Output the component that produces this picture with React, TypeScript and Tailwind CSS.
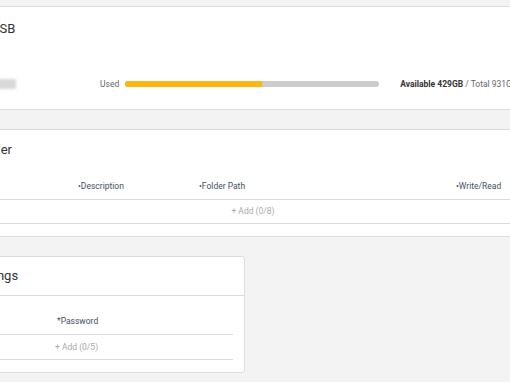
export default function App() {
  return (
    <div className="w-[510px] h-[382px] overflow-hidden bg-[#f3f3f3] font-['Roboto',sans-serif]">
      <div className="-ml-[90px] w-[680px] pt-[6px] flex flex-col gap-[19px]">
        {/* Storage card */}
        <div className="h-[104px] bg-white border border-[#dcdcdc]">
          <div className="h-[44px] flex items-center pl-[80px] text-[13px] text-[#333]">USB</div>
          <div className="mt-[26px] h-[14px] flex items-center text-[8.5px]">
            <div className="ml-[78px] w-[27px] h-[10px] bg-[#d8d8d8] blur-[1.5px]" />
            <span className="ml-[84px] text-[#666]">Used</span>
            <div className="ml-[6px] w-[254px] h-[6px] rounded-full bg-[#cccccc] overflow-hidden">
              <div className="h-full bg-[#fbb614]" style={{ width: '54%' }} />
            </div>
            <span className="ml-[21px] whitespace-nowrap text-[#666]">
              <b className="text-[#333]">Available 429GB</b> / Total 931GB
            </span>
          </div>
        </div>

        {/* Shared folder card */}
        <div className="h-[108px] bg-white border border-[#dcdcdc]">
          <div className="h-[40px] flex items-center pl-[21px] text-[13px] text-[#333]">Shared Folder</div>
          <div className="ml-[42px] w-[600px]">
            <div className="h-[30px] grid grid-cols-[125px_121px_257px_1fr] items-end pb-[6px] border-b border-[#dcdcdc] text-[8.5px] text-[#3f4f63]">
              <span>•Name</span>
              <span>•Description</span>
              <span>•Folder Path</span>
              <span>•Write/Read</span>
            </div>
            <div className="h-[24px] flex items-center justify-center border-b border-[#dcdcdc] text-[8.5px] text-[#aaa]">
              + Add (0/8)
            </div>
          </div>
        </div>

        {/* Account settings card */}
        <div className="w-[335px] h-[117px] bg-white border border-[#dcdcdc] rounded-[3px]">
          <div className="h-[39px] flex items-center pl-[30px] border-b border-[#dcdcdc] text-[13px] text-[#333]">
            User Settings
          </div>
          <div className="ml-[42px] mr-[11px]">
            <div className="h-[39px] grid grid-cols-[104px_1fr] items-end pb-[6px] border-b border-[#dcdcdc] text-[8.5px] text-[#3f4f63]">
              <span>*Username</span>
              <span>*Password</span>
            </div>
            <div className="h-[25px] flex items-center pl-[102px] border-b border-[#dcdcdc] text-[8.5px] text-[#aaa]">
              + Add (0/5)
            </div>
          </div>
        </div>
      </div>
    </div>
  )
}
